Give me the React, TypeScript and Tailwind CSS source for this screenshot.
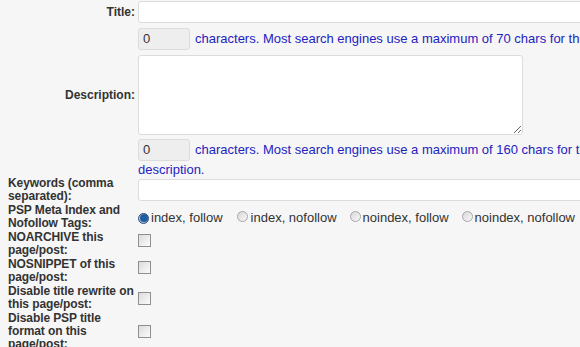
import React from "react";

function Radio({ checked }: { checked?: boolean }) {
  return (
    <span
      className={
        "inline-flex items-center justify-center w-[11px] h-[11px] rounded-full border shrink-0 " +
        (checked
          ? "border-[#2a4f7a] bg-gradient-to-b from-[#cfe3f5] to-[#9cc0e3]"
          : "border-[#a6a6a6] bg-gradient-to-br from-[#d8d8d8] to-[#f8f8f8]")
      }
    >
      {checked && <span className="w-[6px] h-[6px] rounded-full bg-[#1c5fa8] shadow-[0_0_1px_1px_#1f4e85]" />}
    </span>
  );
}

function Checkbox() {
  return (
    <span className="inline-block w-[13px] h-[13px] border border-[#8e8f8f] bg-gradient-to-br from-[#dcdcdc] to-[#fbfbfb] shrink-0" />
  );
}

function LowRow({ label, children, tall }: { label: React.ReactNode; children: React.ReactNode; tall?: boolean }) {
  return (
    <div className={"flex items-center " + (tall ? "h-[39px]" : "h-[26px]")}>
      <div className="ml-[8px] w-[127px] shrink-0 font-bold leading-[13px] text-[#333] whitespace-nowrap tracking-[-0.1px]">{label}</div>
      <div className="ml-[3px] flex items-center">{children}</div>
    </div>
  );
}

export default function App() {
  const font = { fontFamily: '"Liberation Sans", Arial, sans-serif' };
  return (
    <div
      className="w-[580px] h-[347px] overflow-hidden bg-[#f6f6f6] text-[12px] text-[#333]"
      style={font}
    >
      <div className="pt-[1px] flex items-center">
        <div className="w-[135px] shrink-0 text-right font-bold">Title:</div>
        <div className="ml-[3px] w-[600px] shrink-0 h-[22px] bg-white border border-[#dcdcdc] rounded-[3px]" />
      </div>
      <div className="mt-[5px] flex items-center">
        <div className="w-[135px] shrink-0" />
        <div className="ml-[3px] flex items-center whitespace-nowrap">
          <div className="w-[52px] h-[22px] bg-[#eeeeee] border border-[#dcdcdc] rounded-[3px] pl-[4px] leading-[20px] text-[#333] text-[13px]">0</div>
          <span className="ml-[5px] text-[#2323c0] text-[13px]">characters. Most search engines use a maximum of 70 chars for the title.</span>
        </div>
      </div>
      <div className="mt-[5px] flex items-center">
        <div className="w-[135px] shrink-0 text-right font-bold">Description:</div>
        <textarea
          readOnly
          className="ml-[3px] w-[385px] h-[80px] bg-white border border-[#dcdcdc] rounded-[3px] outline-none"
        />
      </div>
      <div className="mt-[4px] flex">
        <div className="w-[135px] shrink-0" />
        <div className="ml-[3px]">
          <div className="flex items-center whitespace-nowrap">
            <div className="w-[52px] h-[22px] bg-[#eeeeee] border border-[#dcdcdc] rounded-[3px] pl-[4px] leading-[20px] text-[#333] text-[13px]">0</div>
            <span className="ml-[5px] text-[#2323c0] text-[13px]">characters. Most search engines use a maximum of 160 chars for the</span>
          </div>
          <div className="mt-[2px] leading-[14px] text-[#2323c0] text-[13px]">description.</div>
        </div>
      </div>
      <div className="flex items-center h-[26px]">
        <div className="ml-[8px] w-[127px] shrink-0 font-bold leading-[13px] whitespace-nowrap tracking-[-0.1px]">
          Keywords (comma
          <br />
          separated):
        </div>
        <div className="ml-[3px] w-[600px] shrink-0 h-[22px] bg-white border border-[#dcdcdc] rounded-[3px]" />
      </div>
      <div className="mt-[1px] flex flex-col gap-[1px]">
        <LowRow
          label={
            <>
              PSP Meta Index and
              <br />
              Nofollow Tags:
            </>
          }
        >
          <div className="flex items-center mt-[2px] whitespace-nowrap text-[13px]">
            <Radio checked />
            <span className="ml-[2px]">index, follow</span>
            <span className="ml-[14px]"><Radio /></span>
            <span className="ml-[3px]">index, nofollow</span>
            <span className="ml-[13px]"><Radio /></span>
            <span className="ml-[2px]">noindex, follow</span>
            <span className="ml-[13px]"><Radio /></span>
            <span className="ml-[2px]">noindex, nofollow</span>
          </div>
        </LowRow>
        <LowRow
          label={
            <>
              NOARCHIVE this
              <br />
              page/post:
            </>
          }
        >
          <span className="-mt-[2px]"><Checkbox /></span>
        </LowRow>
        <LowRow
          label={
            <>
              NOSNIPPET of this
              <br />
              page/post:
            </>
          }
        >
          <span className="-mt-[2px]"><Checkbox /></span>
        </LowRow>
        <LowRow
          label={
            <>
              Disable title rewrite on
              <br />
              this page/post:
            </>
          }
        >
          <Checkbox />
        </LowRow>
        <LowRow
          tall
          label={
            <>
              Disable PSP title
              <br />
              format on this
              <br />
              page/post:
            </>
          }
        >
          <Checkbox />
        </LowRow>
      </div>
    </div>
  );
}
